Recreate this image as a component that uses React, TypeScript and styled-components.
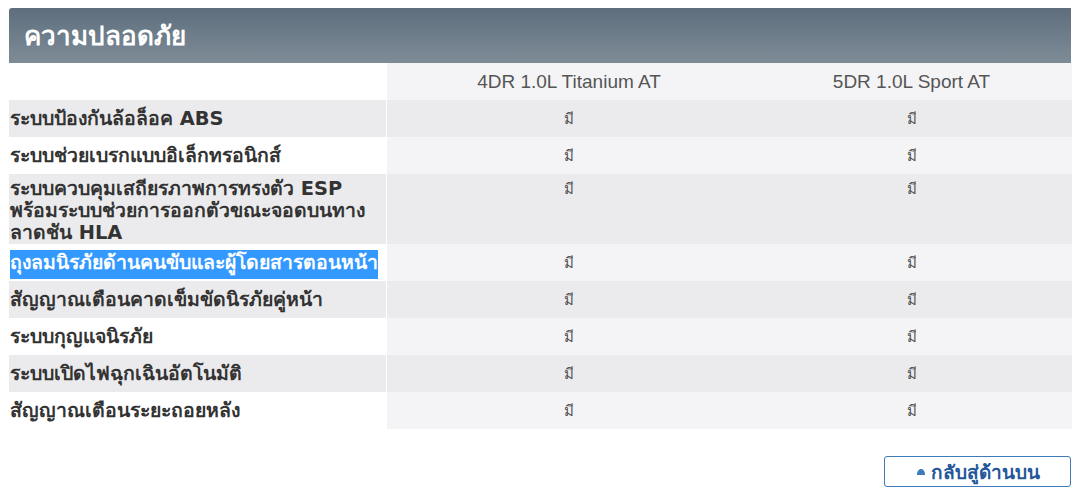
import React from 'react';
import styled, { createGlobalStyle } from 'styled-components';

const GlobalStyle = createGlobalStyle`
  html, body {
    margin: 0;
    padding: 0;
    background: #fff;
  }
  body {
    font-family: Tahoma, "DejaVu Sans", "Noto Sans", sans-serif;
  }
`;

const Page = styled.div`
  width: 1062px;
  padding: 8px 0 0 9px;
`;

const SectionHeader = styled.div`
  height: 55px;
  display: flex;
  align-items: center;
  padding: 0 15px;
  border-radius: 3px 0 0 0;
  background: linear-gradient(to bottom, #5e6e7d 0%, #7e8c97 100%);
  color: #fff;
  font-size: 26px;
  font-weight: bold;
`;

const Table = styled.table`
  width: 100%;
  border-collapse: collapse;
  table-layout: fixed;
`;

const Row = styled.tr<{ $shade: 'head' | 'gray' | 'light'; $tall?: boolean }>`
  > td {
    padding: ${(p) => (p.$tall ? '4px 0 0' : '8px 0 7px')};
    background: ${(p) => (p.$shade === 'gray' ? '#ebebed' : '#f4f4f6')};
  }
  > td:first-child {
    padding-left: 1px;
    background: ${(p) => (p.$shade === 'gray' ? '#ebebed' : '#fff')};
  }
`;

const LabelCell = styled.td`
  width: 376px;
  border-right: 1px solid #fff;
  vertical-align: top;
  font-size: 19.4px;
  line-height: 22px;
  font-weight: bold;
  color: #333;
`;

const ValueCell = styled.td<{ $w: number }>`
  width: ${(p) => p.$w}px;
  vertical-align: top;
  text-align: center;
  font-size: 15px;
  line-height: 22px;
  color: #555;
`;

const ModelCell = styled(ValueCell)`
  font-family: "Liberation Sans", Arial, sans-serif;
  font-size: 19px;
`;

const Highlight = styled.span`
  background: #3399ff;
  color: #fff;
  padding: 1px 0 5px;
`;

const Footer = styled.div`
  display: flex;
  justify-content: flex-end;
  padding-top: 27px;
`;

const TopButton = styled.button`
  width: 187px;
  height: 31px;
  display: flex;
  align-items: center;
  justify-content: center;
  gap: 6px;
  padding: 0 0 0 2px;
  background: #fff;
  border: 1px solid #3f7bb8;
  border-radius: 3px;
  color: #24579a;
  font-family: Tahoma, "DejaVu Sans", "Noto Sans", sans-serif;
  font-size: 19px;
  font-weight: bold;
  cursor: pointer;
`;

const rows = [
  'ระบบป้องกันล้อล็อค ABS',
  'ระบบช่วยเบรกแบบอิเล็กทรอนิกส์',
  'ระบบควบคุมเสถียรภาพการทรงตัว ESP พร้อมระบบช่วยการออกตัวขณะจอดบนทางลาดชัน HLA',
  'ถุงลมนิรภัยด้านคนขับและผู้โดยสารตอนหน้า',
  'สัญญาณเตือนคาดเข็มขัดนิรภัยคู่หน้า',
  'ระบบกุญแจนิรภัย',
  'ระบบเปิดไฟฉุกเฉินอัตโนมัติ',
  'สัญญาณเตือนระยะถอยหลัง',
];

export default function App() {
  return (
    <Page>
      <GlobalStyle />
      <SectionHeader>ความปลอดภัย</SectionHeader>
      <Table>
        <tbody>
          <Row $shade="head">
            <LabelCell />
            <ModelCell $w={364}>4DR 1.0L Titanium AT</ModelCell>
            <ModelCell $w={321}>5DR 1.0L Sport AT</ModelCell>
          </Row>
          {rows.map((r, i) => (
            <Row key={r} $shade={i % 2 === 0 ? 'gray' : 'light'} $tall={i === 2}>
              <LabelCell>{i === 3 ? <Highlight>{r}</Highlight> : r}</LabelCell>
              <ValueCell $w={364}>มี</ValueCell>
              <ValueCell $w={321}>มี</ValueCell>
            </Row>
          ))}
        </tbody>
      </Table>
      <Footer>
        <TopButton>
          <svg width="8" height="6" viewBox="0 0 8 6">
            <path d="M0 6 C0 2 2 0 4 0 C6 0 8 2 8 6 Z" fill="#3f7bb8" />
          </svg>
          กลับสู่ด้านบน
        </TopButton>
      </Footer>
    </Page>
  );
}
